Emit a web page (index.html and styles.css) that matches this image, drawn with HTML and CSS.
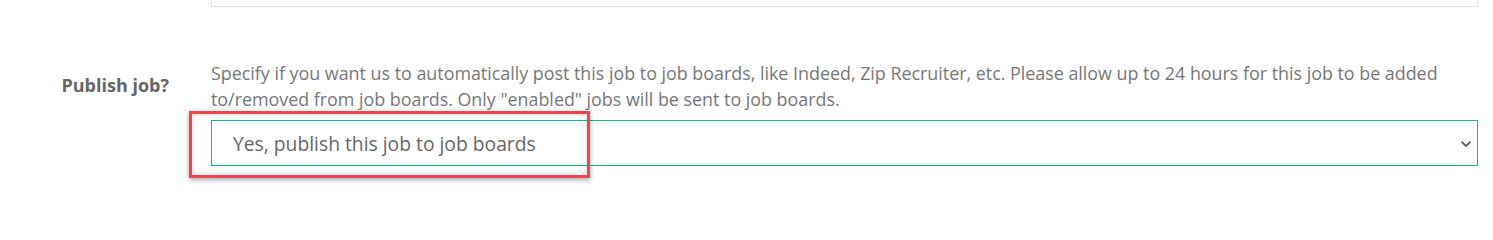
FILE: index.html
```html
<!DOCTYPE html>
<html>
<head>
<meta charset="utf-8">
<link rel="stylesheet" href="styles.css">
</head>
<body>
<div class="page">
  <div class="row row-top">
    <div class="label"></div>
    <div class="field"><div class="prev-box"></div></div>
  </div>
  <div class="row row-publish">
    <div class="label">Publish job?</div>
    <div class="field">
      <p class="help">Specify if you want us to automatically post this job to job boards, like Indeed, Zip Recruiter, etc. Please allow up to 24 hours for this job to be added to/removed from job boards. Only "enabled" jobs will be sent to job boards.</p>
      <div class="select-wrap">
        <div class="select">
          <span class="select-text">Yes, publish this job to job boards</span>
          <svg class="chevron" width="12" height="8" viewBox="0 0 12 8"><path d="M1.5 1.8 L6 6 L10.5 1.8" fill="none" stroke="#666" stroke-width="2"/></svg>
        </div>
        <div class="highlight"></div>
      </div>
    </div>
  </div>
</div>
</body>
</html>
```
FILE: styles.css
```css
html, body {
  margin: 0;
  padding: 0;
  background: #fff;
}
body {
  font-family: "Open Sans", "Liberation Sans", sans-serif;
  color: #777;
  width: 1493px;
  height: 224px;
  overflow: hidden;
}
.page {
  display: flex;
  flex-direction: column;
}
.row {
  display: flex;
}
.label {
  width: 169px;
  flex: none;
  padding-right: 42px;
  text-align: right;
  font-weight: 700;
  font-size: 18px;
  color: #666;
}
.field {
  width: 1267px;
  flex: none;
}
.row-top {
  margin-top: -40px;
}
.prev-box {
  height: 46px;
  border: 1px solid #e3e3e3;
  border-top: none;
}
.row-publish {
  margin-top: 53px;
}
.row-publish .label {
  padding-top: 13px;
}
.help {
  margin: 0;
  font-size: 17.88px;
  line-height: 26px;
  color: #777;
}
.select-wrap {
  position: relative;
  margin-top: 8px;
}
.select {
  height: 44px;
  border: 1px solid #1ab394;
  display: flex;
  align-items: center;
  justify-content: space-between;
  padding: 0 5px 0 21px;
}
.select-text {
  font-size: 19.3px;
  color: #666;
}
.chevron {
  display: block;
  margin-top: 2px;
}
.highlight {
  position: absolute;
  left: -22px;
  top: -9px;
  width: 395px;
  height: 61px;
  border: 3px solid #f2444a;
  box-shadow: 0 2px 5px rgba(0,0,0,0.35), inset 0 0 4px rgba(0,0,0,0.2);
  pointer-events: none;
}
```
